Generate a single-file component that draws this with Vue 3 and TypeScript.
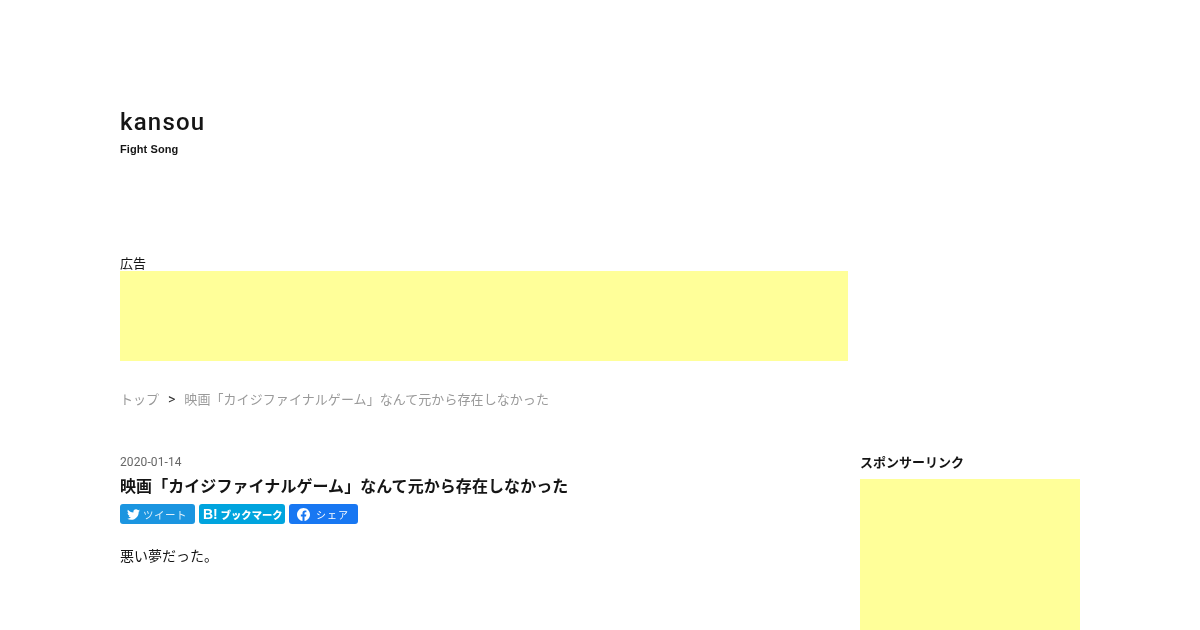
<script setup lang="ts">
const title = '映画「カイジファイナルゲーム」なんて元から存在しなかった'
</script>

<template>
  <div class="page">
    <header class="brand">
      <h1 class="logo">kansou</h1>
      <p class="tagline">Fight Song</p>
    </header>

    <section class="top-ad">
      <div class="ad-label">広告</div>
      <div class="ad ad-wide"></div>
    </section>

    <nav class="crumbs">
      <span>トップ</span>
      <span class="sep">&gt;</span>
      <span class="crumb-title">{{ title }}</span>
    </nav>

    <div class="columns">
      <main class="article">
        <time class="date">2020-01-14</time>
        <h2 class="title">{{ title }}</h2>
        <div class="shares">
          <a class="btn tw">
            <svg class="ico-tw" viewBox="0 0 24 24" aria-hidden="true">
              <path fill="#fff" d="M23.95 4.57a10 10 0 0 1-2.82.77 4.96 4.96 0 0 0 2.16-2.72c-.95.55-2 .96-3.13 1.19a4.92 4.92 0 0 0-8.38 4.48C7.69 8.1 4.07 6.13 1.64 3.16a4.82 4.82 0 0 0-.67 2.48c0 1.71.87 3.21 2.19 4.1a4.9 4.9 0 0 1-2.23-.62v.06a4.92 4.92 0 0 0 3.95 4.83 4.99 4.99 0 0 1-2.21.08 4.94 4.94 0 0 0 4.6 3.42A9.87 9.87 0 0 1 0 19.54a14 14 0 0 0 7.56 2.21c9.05 0 14-7.5 14-13.98 0-.21 0-.42-.02-.63a9.94 9.94 0 0 0 2.41-2.57z"/>
            </svg>
            <span class="tw-label">ツイート</span>
          </a>
          <a class="btn hb">
            <span class="hb-mark">B!</span>
            <span class="hb-label">ブックマーク</span>
          </a>
          <a class="btn fb">
            <svg class="ico-fb" viewBox="0 0 24 24" aria-hidden="true">
              <path fill="#fff" d="M24 12.07C24 5.4 18.63 0 12 0S0 5.4 0 12.07c0 6.03 4.39 11.02 10.13 11.93v-8.44H7.08v-3.49h3.05V9.41c0-3.02 1.79-4.69 4.53-4.69 1.31 0 2.69.24 2.69.24v2.97h-1.52c-1.49 0-1.96.93-1.96 1.89v2.25h3.33l-.53 3.49h-2.8V24C19.61 23.09 24 18.1 24 12.07z"/>
            </svg>
            <span class="fb-label">シェア</span>
          </a>
        </div>
        <p class="body">悪い夢だった。</p>
      </main>

      <aside class="side">
        <div class="side-label">スポンサーリンク</div>
        <div class="ad ad-side"></div>
      </aside>
    </div>
  </div>
</template>

<style>
html, body { margin: 0; overflow: hidden; background: #fff; }
</style>

<style scoped>
.page {
  width: 960px;
  margin: 0 auto;
  color: #151515;
  font-family: Roboto, "Noto Sans CJK JP", sans-serif;
  font-size: 13px;
  will-change: transform;
}
.brand { padding-top: 106px; height: 145px; }
.logo {
  margin: 0;
  font-size: 24px;
  line-height: 32px;
  font-weight: 500;
  letter-spacing: 1.2px;
}
.tagline {
  margin: 3px 0 0;
  font-family: "Liberation Sans", sans-serif;
  font-size: 11px;
  line-height: 16px;
  font-weight: 700;
  letter-spacing: .1px;
}
.top-ad { width: 728px; }
.ad-label { font-size: 13px; line-height: 15px; margin-top: -1px; padding-top: 6px; }
.ad { background: #ffff99; }
.ad-wide { height: 90px; }
.crumbs {
  margin-top: 30px;
  height: 17px;
  line-height: 17px;
  color: #9a9a9a;
  display: flex;
  gap: 9px;
}
.sep { color: #333; font-size: 14px; }
.crumb-title { letter-spacing: .07px; }
.columns { display: flex; justify-content: space-between; margin-top: 46px; }
.article { width: 728px; }
.date { display: block; font-size: 12px; line-height: 16px; color: #666; letter-spacing: .1px; }
.title { margin: 5px 0 0; font-size: 16px; line-height: 23px; font-weight: 700; letter-spacing: .07px; }
.shares { display: flex; gap: 4px; margin-top: 6px; height: 20px; }
.btn {
  display: flex;
  align-items: center;
  height: 20px;
  border-radius: 3px;
  color: #fff;
  box-sizing: border-box;
}
.tw { width: 75px; background: #1b95e0; padding-left: 7px; }
.ico-tw { width: 13px; height: 13px; }
.tw-label { margin-left: 3px; font-size: 10.5px; letter-spacing: .5px; opacity: .85; }
.hb { width: 86px; background: #00a4de; padding-left: 4px; }
.hb-mark { font-family: "Liberation Sans", sans-serif; font-weight: 700; font-size: 14px; }
.hb-label { font-size: 10.3px; font-weight: 900; margin-left: 3px; white-space: nowrap; }
.fb { width: 69px; background: #1877f2; padding-left: 8px; }
.ico-fb { width: 13px; height: 13px; }
.fb-label { margin-left: 6px; font-size: 10px; letter-spacing: 1px; }
.body { margin: 22px 0 0; font-size: 14px; line-height: 21px; }
.side { width: 220px; }
.side-label { font-size: 13px; line-height: 17px; font-weight: 700; margin-bottom: 8px; }
.ad-side { height: 250px; }
</style>
